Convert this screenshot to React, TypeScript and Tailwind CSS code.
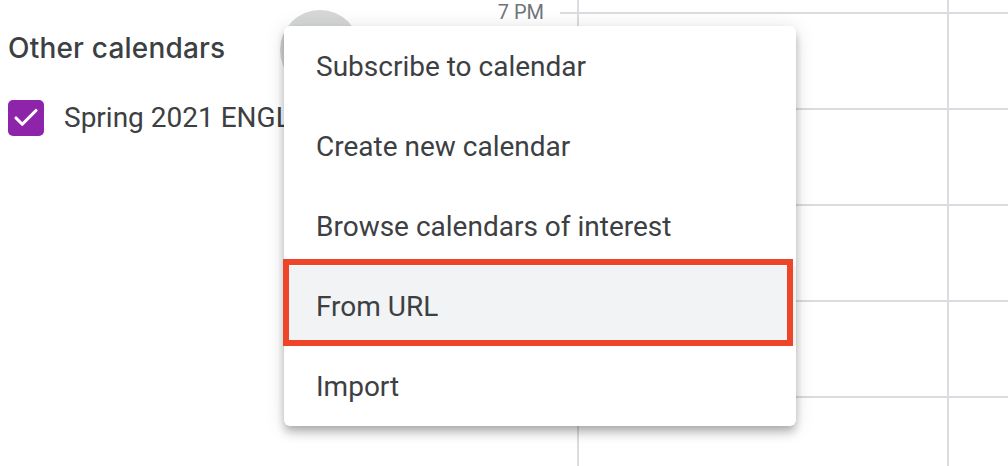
import { Check } from "lucide-react";

const menuItems = [
  "Subscribe to calendar",
  "Create new calendar",
  "Browse calendars of interest",
  "From URL",
  "Import",
];

function GridColumn({ width, bordered }: { width: string; bordered: boolean }) {
  return (
    <div className={`${width} shrink-0 flex flex-col ${bordered ? "border-l-2 border-[#dadce0]" : ""}`}>
      <div className="h-[12px] shrink-0" />
      {[0, 1, 2, 3, 4].map((i) => (
        <div key={i} className="h-[96px] shrink-0 border-t-2 border-[#dadce0]" />
      ))}
    </div>
  );
}

export default function App() {
  return (
    <div
      className="relative flex h-[466px] w-[1008px] overflow-hidden bg-white text-[#3c4043]"
      style={{ fontFamily: "Roboto, 'Liberation Sans', sans-serif" }}
    >
      {/* sidebar */}
      <aside className="w-[480px] shrink-0 pl-2 pt-[10px]">
        <div className="flex h-[80px] items-center">
          <h2
            className="w-[272px] pb-[4px] text-[28px] font-medium tracking-[0.2px] text-[#3c4043]"
            style={{ fontFamily: "Inter, 'Open Sans', sans-serif" }}
          >
            Other calendars
          </h2>
          <div className="h-[80px] w-[80px] rounded-full bg-[#d6d7d7]" />
        </div>
        <div className="flex h-[56px] items-center gap-5">
          <div className="flex h-[36px] w-[36px] items-center justify-center rounded-[5px] bg-[#8e24aa]">
            <Check className="h-[30px] w-[30px] text-white" strokeWidth={2.5} />
          </div>
          <span className="whitespace-nowrap text-[28px]">Spring 2021 ENGL 1302</span>
        </div>
      </aside>

      {/* time gutter */}
      <div className="w-[80px] shrink-0 pr-4 text-right">
        <span className="block -mt-[3px] text-[20px] leading-[30px] text-[#70757a]">7 PM</span>
      </div>

      {/* grid */}
      <div className="flex flex-1">
        <GridColumn width="w-[17px]" bordered={false} />
        <GridColumn width="w-[370px]" bordered />
        <GridColumn width="w-[80px]" bordered />
      </div>

      {/* add calendar menu */}
      <div className="absolute left-[284px] top-[26px] w-[512px] rounded-[6px] bg-white shadow-[0_8px_10px_0_rgba(0,0,0,0.14),0_2px_20px_0_rgba(0,0,0,0.12),0_4px_8px_-2px_rgba(0,0,0,0.2)]">
        {menuItems.map((item) => (
          <div
            key={item}
            className={`relative flex h-[80px] items-center pl-8 pt-[2px] text-[28px] ${
              item === "From URL" ? "bg-[#f1f3f4]" : ""
            } ${item === "Subscribe to calendar" ? "rounded-t-[6px]" : ""} ${
              item === "Import" ? "rounded-b-[6px]" : ""
            }`}
          >
            {item}
            {item === "From URL" && (
              <div className="absolute -left-px -top-[7px] h-[87px] w-[510px] border-[6px] border-[#ee4427]" />
            )}
          </div>
        ))}
      </div>
    </div>
  );
}
